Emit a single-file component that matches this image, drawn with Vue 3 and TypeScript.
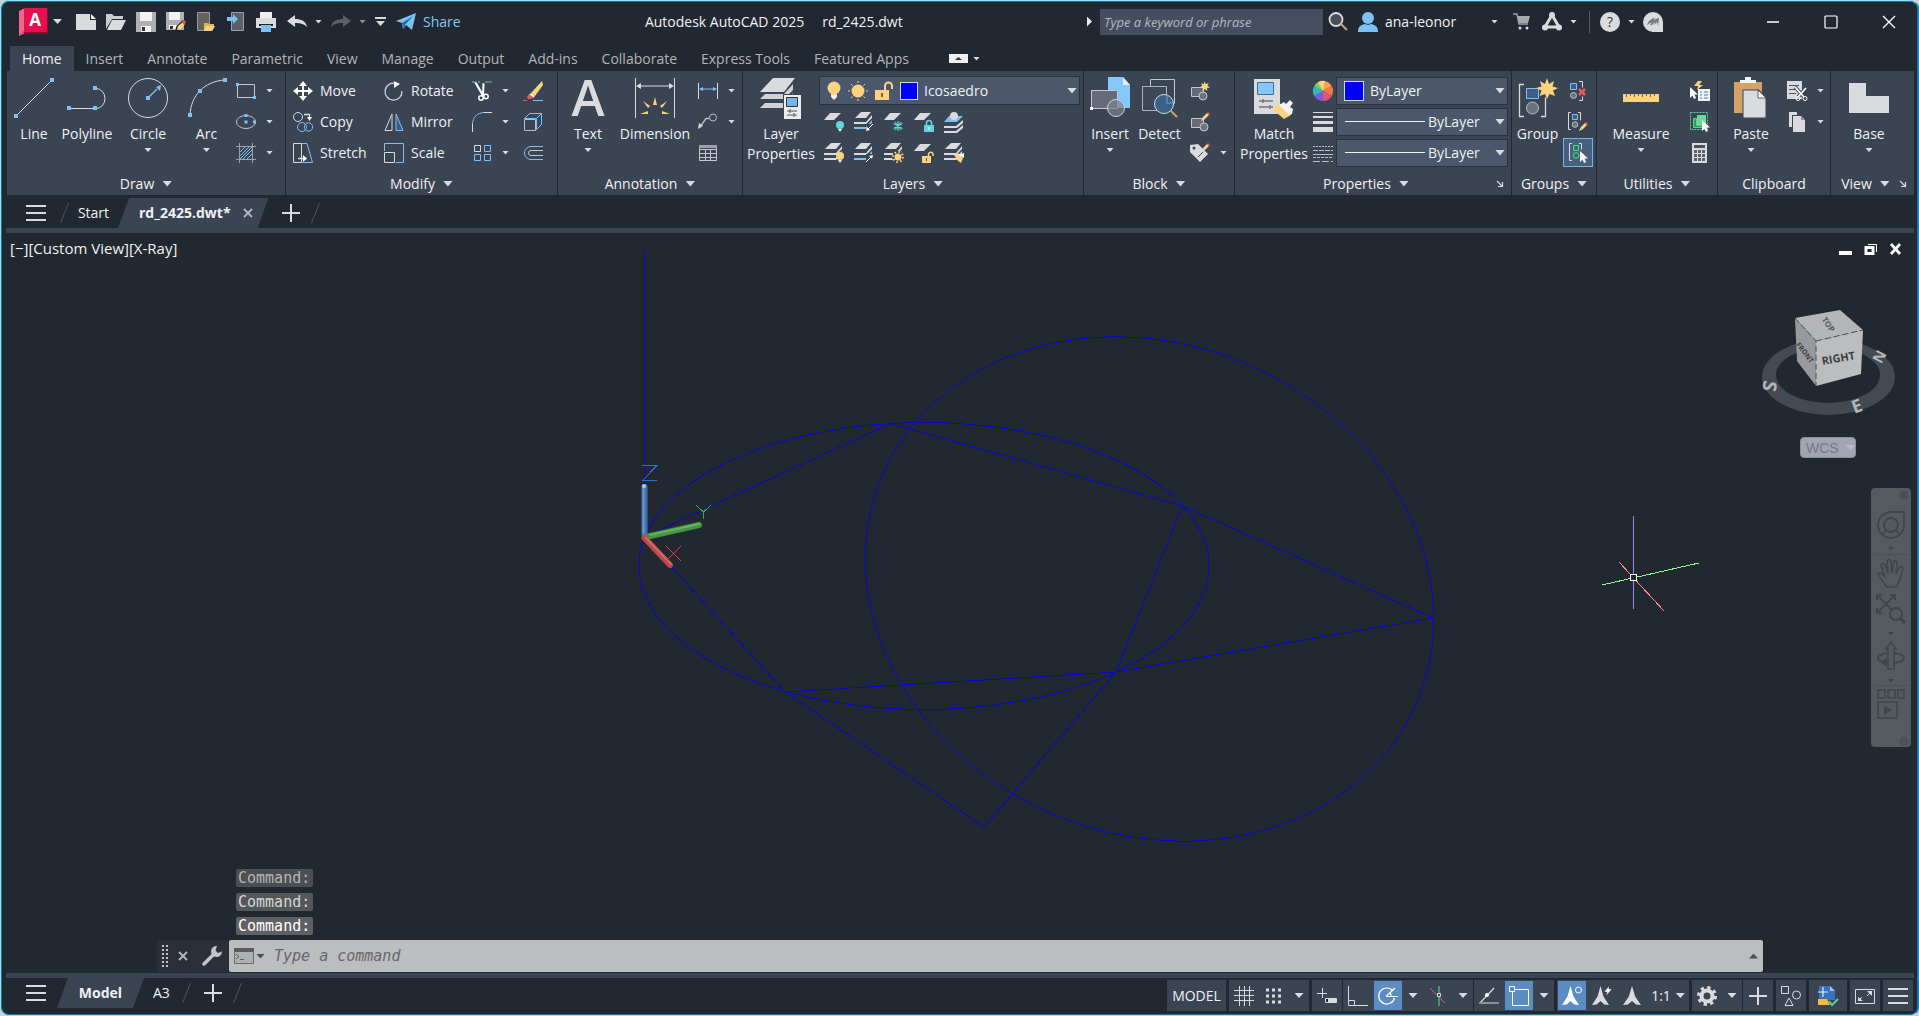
<script setup lang="ts">
import { h, ref, type FunctionalComponent } from 'vue'

const L = '#d9dbde'
const B = '#7cc0f5'
const Y = '#fbd27d'
const T = '#62d5d9'
const R = '#e8595c'

type Art = [number, number, string]

const sheet = (y: number, c = L) => `<path d="M6 ${y}h11l-7 7H0z" fill="${c}"/>`
const stack = (mid = L, last = L) =>
  `<path d="M7 0h10l-5 6H1z" fill="${L}"/><path d="M0 10h12l6-7v3l-6 6H0z" fill="${mid}"/><path d="M0 15h12l6-7v3l-6 6H0z" fill="${last}"/>`
const pencil = (x: number, y: number) =>
  `<g transform="translate(${x} ${y})"><path d="M0 9l1.500-3.500 2 2z" fill="${L}"/><path d="M1.500 5.500L6 1l2 2-4.500 4.500z" fill="${Y}"/><path d="M6 1l1-1 2 2-1 1z" fill="${R}"/></g>`
const cursor = (x: number, y: number) =>
  `<path transform="translate(${x} ${y})" d="M0 0v11l2.500-2.500L4 12l2-1-1.500-3.500H8z" fill="#fff"/>`
const node = (x: number, y: number) => `<path d="M${x - 2} ${y - 2}h4v4h-4z" fill="${B}"/>`
const compass =
  '<path d="M10 0l3.500 10.500L20 19l-5.500-.5L10 15l-4.500 3.500L0 19l6.500-8.500z"'

const art: Record<string, Art> = {
  logo: [30, 28, `<path d="M0 3L6 0v25l-6 3z" fill="#f0678c"/><path d="M5 0h24v24l1 2H5z" fill="#8e0c32"/><path d="M5 0h23v24H5L0 27l5-4z" fill="#e51050"/><text x="16" y="18" text-anchor="middle" font-family="Open Sans, sans-serif" font-weight="700" font-size="17" fill="#fff">A</text>`],
  file: [20, 16, `<path d="M0 0h14v6h6v10H0z" fill="${L}"/><path d="M15 0l5 5h-5z" fill="#f2f2f2"/>`],
  open: [20, 17, `<path d="M0 16V1h6l2 2h9v3H6z" fill="#c9cbcd"/><path d="M6 7h14l-5 10H1z" fill="${L}"/>`],
  save: [20, 20, `<path d="M0 0h20v20H0z" fill="#aeb0b3"/><path d="M4 0h12v9H4zM5 14h10v6H5z" fill="#f3f3f3"/><path d="M6 15h3v4H6z" fill="#333"/>`],
  saveas: [20, 20, `<path d="M0 0h18v18H0z" fill="#aeb0b3"/><path d="M3 0h11v8H3zM3 13h8v4H3z" fill="#f3f3f3"/><path d="M4 14h3v3H4z" fill="#333"/><path d="M9 19l1.500-5L17 8l3 3-6.500 6z" fill="#222931"/><path d="M11 18l1-4 5-4 2 2-4 5z" fill="${Y}"/><path d="M16 10l2-2 2 2-2 3z" fill="${R}"/>`],
  mobopen: [20, 20, `<path d="M1.500.5h12v18h-12z" fill="#65625f" stroke="#9a9894"/><path d="M8 19v-8h4l1 1h5v2h1l-3 5z" fill="#e0b357"/><path d="M10 14h9l-3 5H8z" fill="${Y}"/>`],
  mobsave: [18, 20, `<path d="M4.500.5h12v18h-12z" fill="#596068" stroke="#9aa0a6"/><path d="M0 5h6V2l5 5-5 5V9H0z" fill="${B}"/>`],
  print: [20, 20, `<path d="M4 0h12v6H4z" fill="#eee"/><path d="M0 6h20v10H0z" fill="${L}"/><path d="M3 12h14v2H3z" fill="#222"/><path d="M5 13h10v7H5z" fill="${B}"/>`],
  undo: [20, 13, `<path d="M8 0v4c6 0 11 2 12 8-3-3-6-4-12-4v4L0 6z" fill="${L}"/>`],
  redo: [20, 13, `<path d="M12 0v4C6 4 1 6 0 12c3-3 6-4 12-4v4l8-6z" fill="#59606a"/>`],
  custom: [12, 9, `<path d="M0 0h11v2H0zM1 4h9L5.500 9z" fill="${L}"/>`],
  plane: [20, 17, `<path d="M0 8L20 0l-4 17-6-5-3 4-1-6z" fill="${B}"/><path d="M6 10L17 3l-8 9-1 4z" fill="#2b6ea6"/>`],
  lens: [20, 19, `<circle cx="8" cy="7.500" r="6.500" fill="#4a4f57" stroke="${L}" stroke-width="1.800"/><path d="M13 12l6 6" stroke="#caa375" stroke-width="2"/>`],
  user: [20, 20, `<circle cx="10" cy="6" r="6" fill="${B}"/><path d="M0 20c0-5 2-7 7-8 2 1 4 1 6 0 5 1 7 3 7 8z" fill="${B}"/>`],
  cart: [18, 17, `<path d="M0 1h4l2 10h9" fill="none" stroke="#9a9ea4" stroke-width="1.500"/><path d="M4 3h13l-2 7H6z" fill="#a5a8ad"/><circle cx="7" cy="15" r="1.500" fill="${L}"/><circle cx="14" cy="15" r="1.500" fill="${L}"/>`],
  appdesk: [20, 19, `<path d="M10 3L3 15h14z" fill="none" stroke="${L}" stroke-width="3"/><circle cx="10" cy="3" r="3" fill="${L}"/><circle cx="3" cy="15.500" r="3" fill="${L}"/><circle cx="17" cy="15.500" r="3" fill="${L}"/>`],
  help: [20, 20, `<circle cx="10" cy="10" r="10" fill="${L}"/><text x="10" y="15" text-anchor="middle" font-family="Open Sans, sans-serif" font-size="14" fill="#333">?</text>`],
  assist: [20, 20, `<path d="M10 0a10 10 0 0110 10v10H10A10 10 0 0110 0z" fill="${L}"/><path d="M4 13c2-5 5-7 8-7l-2 4c2-3 4-4 6-4l-1 8-1-4-3 3 1-3-3 3H7l2-3z" fill="#77797d"/>`],
  min: [14, 14, '<path d="M1 7h12" stroke="#fff" stroke-width="1.500"/>'],
  max: [14, 14, '<rect x="1" y="1" width="12" height="12" rx="1" fill="none" stroke="#fff" stroke-width="1.200"/>'],
  close: [14, 14, '<path d="M1 1l12 12M13 1L1 13" stroke="#fff" stroke-width="1.300"/>'],
  mini: [19, 9, '<path d="M0 0h19v9H0z" fill="#f0f0f0"/><path d="M6 6l3.500-3L13 6z" fill="#333"/>'],
  burger: [20, 16, `<path d="M0 1h20M0 8h20M0 15h20" stroke="${L}" stroke-width="2"/>`],
  plus: [18, 18, `<path d="M9 0v18M0 9h18" stroke="${L}" stroke-width="2"/>`],
  slash: [9, 20, '<path d="M8.500 0L.5 20" stroke="#4c5461"/>'],
  x: [10, 10, '<path d="M1 1l8 8M9 1L1 9" stroke="#b3b7bd" stroke-width="1.800"/>'],

  line: [40, 40, `<path d="M2 38L38 2" stroke="${L}"/>${node(2, 38)}${node(38, 2)}`],
  polyline: [42, 40, `<path d="M3 30.500h27a9 10 0 000-20" fill="none" stroke="${L}"/>${node(3, 30)}${node(29, 30)}${node(29, 10)}`],
  circle: [40, 40, `<circle cx="20" cy="20" r="19.500" fill="none" stroke="${L}"/><path d="M20 20l9-9" stroke="${B}" stroke-width="1.500"/><path d="M33 7l-1 6-4-4z" fill="${B}"/>${node(20, 20)}`],
  arc: [40, 40, `<path d="M3 37C4 17 17 4 37 2" fill="none" stroke="${L}"/>${node(3, 37)}${node(13, 13)}${node(38, 2)}`],
  rect: [20, 20, `<path d="M1.500 3.500h17v13h-17z" fill="none" stroke="#c4c7cb"/><path d="M0 2h3v3H0zM17 15h3v3h-3z" fill="${B}"/>`],
  ellipse: [20, 20, `<ellipse cx="10" cy="10" rx="9.500" ry="6.500" fill="none" stroke="#c4c7cb"/><path d="M8.500 2h3v3h-3zM8.500 8.500h3v3h-3zM17 8.500h3v3h-3z" fill="${B}"/>`],
  hatch: [20, 20, `<path d="M3.500 0v20M16.500 0v20M0 3.500h20M0 16.500h20" stroke="#9da2aa"/><path d="M4 9l5-5M4 13l9-9M4 16L16 4M7 16l9-9M11 16l5-5" stroke="${B}"/>`],

  move: [20, 20, '<path d="M10 0l4 5h-3v4h4V6l5 4-5 4v-3h-4v4h3l-4 5-4-5h3v-4H5v3l-5-4 5-4v3h4V5H6z" fill="#fff"/>'],
  copy: [20, 20, `<circle cx="5" cy="5" r="4.500" fill="none" stroke="${L}"/><circle cx="9" cy="15" r="4.500" fill="none" stroke="${B}"/><circle cx="15.500" cy="15" r="4.200" fill="none" stroke="${B}"/><path d="M11 2.500h5.500V6" fill="none" stroke="${L}" stroke-width="1.400"/><path d="M14 5h5l-2.500 4z" fill="#fff"/>`],
  stretch: [20, 20, `<path d="M.5.500h8v19h-8z" fill="none" stroke="${L}"/><path d="M9 .5h5l5.500 19H9" fill="none" stroke="${B}"/><path d="M5 15.500h6" stroke="${L}" stroke-width="1.500"/><path d="M10 12l4 3.500-4 3.500z" fill="#fff"/>`],
  rotate: [20, 20, `<path d="M12 2.500A8.500 8.500 0 1018 10" fill="none" stroke="${L}" stroke-width="1.200"/><path d="M10 0l6 3-6 4z" fill="#fff"/>`],
  mirror: [20, 20, `<path d="M8 2v16.500H1z" fill="none" stroke="${L}"/><path d="M12 2v16.500h7z" fill="#3c5c7d" stroke="${B}"/>`],
  scale: [20, 20, `<path d="M.5 8V.500h19v19H12" fill="none" stroke="${B}"/><path d="M.5 9.500h10v10H.5z" fill="none" stroke="${L}"/>`],
  trim: [20, 20, `<path d="M0 1h8" stroke="${B}" stroke-dasharray="2 1"/><path d="M13 1h7" stroke="#9da2aa"/><path d="M2 1l3 1 7 12-2 1z" fill="#fff"/><path d="M10.500 2l2 .5-.5 12h-2z" fill="#fff"/><circle cx="9" cy="17" r="2.200" fill="none" stroke="#fff" stroke-width="1.500"/><circle cx="14" cy="15.500" r="2.200" fill="none" stroke="#fff" stroke-width="1.500"/>`],
  fillet: [20, 20, `<path d="M.500 20V12" stroke="${L}"/><path d="M.5 12C1 5 5 1 12 .5" fill="none" stroke="${B}"/><path d="M12 .5h8" stroke="${L}"/>`],
  array: [20, 20, `<path d="M2.500 2.500h6v6h-6z" fill="none" stroke="${L}"/><path d="M12.500 2.500h6v6h-6zM2.500 11.500h6v6h-6zM12.500 11.500h6v6h-6z" fill="none" stroke="${B}"/>`],
  erase: [20, 20, `<path d="M19 0L8 12l4 3 8-11z" fill="${Y}"/><path d="M8 12l4 3-2 2-4-3z" fill="#f4f4f4"/><path d="M6 13l4 3-2 2H5l-1-2z" fill="${R}"/><path d="M0 19.500h4" stroke="${R}"/><path d="M10 19.500h10" stroke="${B}"/>`],
  solid: [20, 20, `<path d="M1.500 7.500h11v11h-11z" fill="none" stroke="#b9bec5"/><path d="M1.500 6.500l5-5h12v11l-5 5v-11h-12M13.500 6.500l5-5" fill="none" stroke="${B}"/>`],
  offset: [20, 20, `<path d="M20 3.500H8a6.500 6.500 0 000 13h12" fill="none" stroke="${B}"/><path d="M20 7.500H8a2.500 2.500 0 000 5h12" fill="none" stroke="#c4c7cb"/>`],

  text: [40, 40, `<text x="20" y="38" text-anchor="middle" font-family="Open Sans, sans-serif" font-weight="600" font-size="50" fill="${L}">A</text>`],
  dimension: [40, 40, `<path d="M.5 0v40M39.500 0v40M3 8h34" stroke="${L}"/><path d="M1 8l5-3v6zM39 8l-5-3v6z" fill="${L}"/><path d="M18 27l2-8 2 8zM13 30l-5-7 7 5zM27 30l5-7-7 5zM5 36l8-3v3zM35 36l-8-3v3z" fill="${Y}"/>`],
  linear: [20, 20, `<path d="M.5 2v16M19.500 2v16" stroke="${L}"/><path d="M2 8h16" stroke="${B}"/><path d="M1 8l4-2v4zM19 8l-4-2v4z" fill="${B}"/>`],
  leader: [20, 20, `<circle cx="15" cy="5.500" r="3.500" fill="none" stroke="#b9bec5"/><path d="M11.500 6.500H8l-5 7" fill="none" stroke="#b9bec5" stroke-width="1.300"/><path d="M0 17l1-6 4 3z" fill="${L}"/>`],
  table: [20, 20, `<path d="M1.500 2.500h17v15h-17zM1.500 6.500h17M1.500 10.500h17M1.500 14.500h17M7.500 6.500v11M12.500 6.500v11" fill="none" stroke="#c4c7cb"/><path d="M1 2h18v3H1z" fill="#9da2aa"/>`],

  layers: [42, 42, `<path d="M13 1h22L24 15H0z" fill="${L}"/><path d="M0 22l5-5h19l9-10v6l-9 9z" fill="#d0d2d5"/><path d="M0 31l5-5h19l9-10v6l-9 9z" fill="#d0d2d5"/><path d="M23 17h19v25H23z" fill="#3b4453"/><path d="M24 18h17v24H24z" fill="#eceded"/><path d="M26.500 20.500h11v9h-11z" fill="#6db6ee" stroke="#333"/><path d="M27 34h10M27 38h10M30 32v4M34 36v4" stroke="#555"/>`],
  bulb: [14, 20, `<circle cx="7" cy="7" r="6.500" fill="${Y}"/><path d="M4 11h6v3H4z" fill="${Y}"/><path d="M4 14h6v2l-3 3-3-3z" fill="#f0f0f0"/>`],
  sun: [20, 20, `<circle cx="10" cy="10" r="6.500" fill="${Y}"/><path d="M10 0v2M10 18v2M0 10h2M18 10h2M3 3l1.500 1.500M15.500 15.500L17 17M17 3l-1.500 1.500M3 17l1.500-1.500" stroke="${Y}"/>`],
  unlock: [18, 18, `<path d="M0 8h14v10H0z" fill="${Y}"/><path d="M10 8V4a3.500 3.500 0 017 0v3" fill="none" stroke="${Y}" stroke-width="2"/><path d="M6 11h2v4H6z" fill="#79622f"/>`],
  ly1: [20, 20, `${sheet(1)}<circle cx="16" cy="13" r="4" fill="${T}"/><path d="M14 17h4l-2 3z" fill="#eee"/>`],
  ly2: [20, 20, `${stack(L, B)}<path d="M20 12h-7v8l2-2 3-3z" fill="#3b4453"/><path d="M19 12l-5 5" stroke="#fff"/><path d="M12 19l1-4 3 3z" fill="#fff"/>`],
  ly3: [20, 20, `${sheet(1)}<path d="M14 9v10M9.500 11.500l9 5M9.500 16.500l9-5M11 10l6 8M17 10l-6 8" stroke="${T}" stroke-width="1.200"/>`],
  ly4: [20, 20, `${sheet(1)}<path d="M10 13h10v7H10z" fill="${T}"/><path d="M12.500 13v-2a2.500 2.500 0 015 0v2" fill="none" stroke="${T}" stroke-width="1.500"/><path d="M14.500 15h1v3h-1z" fill="#fff"/>`],
  ly5: [20, 20, `<path d="M5 4h14l-6 6H0z" fill="${B}"/><circle cx="10" cy="4" r="4" fill="${L}"/><path d="M0 14h12l7-6v3l-6 5H0zM0 19h12l7-6v3l-6 5H0z" fill="${L}"/>`],
  ly6: [20, 20, `${stack()}<circle cx="16" cy="13" r="4" fill="${Y}"/><path d="M14 17h4l-2 3z" fill="#eee"/>`],
  ly7: [20, 20, `${stack(L, B)}<path d="M20 11h-8v8z" fill="#3b4453"/><path d="M12 19l5-5" stroke="#fff"/><path d="M19 12l-1 4-3-3z" fill="#fff"/>`],
  ly8: [20, 20, `${stack()}<circle cx="14" cy="14" r="6" fill="#3b4453"/><circle cx="14" cy="14" r="3.500" fill="${Y}"/><circle cx="14" cy="14" r="5" fill="none" stroke="${Y}" stroke-width="2" stroke-dasharray="1.500 2.400"/>`],
  ly9: [20, 20, `${sheet(1)}<path d="M8 13h9v7H8z" fill="${Y}"/><path d="M14.500 13v-2a2.300 2.300 0 014.500 0v2" fill="none" stroke="${Y}" stroke-width="1.500"/><path d="M12 15h1v3h-1z" fill="#555"/>`],
  ly10: [20, 20, `${stack()}<path d="M10 12l4-2 5 5-2 5-4-3z" fill="${Y}"/><path d="M14 12l3-1 3-1v5z" fill="#fff"/>`],

  insert: [40, 42, `<path d="M18 0h15l7 8v23H18z" fill="#84c8fb"/><path d="M33 0v8h7z" fill="#dfeefa"/><path d="M1.500 13.500h26v18h-26z" fill="#656c78" stroke="#c4c7cb"/><circle cx="26" cy="31" r="8.500" fill="#7c828c" fill-opacity=".7" stroke="#d0d2d5"/><path d="M0 30h3v3H0z" fill="#fff"/>`],
  detect: [38, 40, `<path d="M9.500 1.500h24v24h-24z" fill="none" stroke="#c4c7cb"/><path d="M1.500 8.500h24v24h-24z" fill="#3e4755" stroke="#aeb2b9"/><circle cx="23" cy="26" r="9.500" fill="#3c5f83" stroke="#c4dcee"/><path d="M26 17v8h7" fill="none" stroke="#5aa9e6"/><path d="M30 33l6 6" stroke="#caa375" stroke-width="2"/>`],
  bnew: [20, 20, `<path d="M1.500 6.500h12v9h-12z" fill="#656c78" stroke="#c4c7cb"/><circle cx="13" cy="15" r="4" fill="#6c737e" stroke="#c4c7cb"/><path d="M14.500 0l1.200 3 3-.8-1.200 2.600 2.500 1.700-3 .6.300 3-2.500-2-2.300 2 .2-3-3-.6 2.500-1.700L11 2.200l3 .8z" fill="${Y}"/>`],
  bedit: [20, 20, `<path d="M1.500 6.500h12v9h-12z" fill="#656c78" stroke="#c4c7cb"/><circle cx="14" cy="15" r="4" fill="#6c737e" stroke="#c4c7cb"/>${pencil(11, 0)}`],
  btag: [20, 20, `<path d="M0 2l8-1 10 10-8 8L0 9z" fill="${L}"/><circle cx="4" cy="5" r="1.500" fill="#3b4453"/><path d="M8 14l5-5" stroke="#3b4453"/>${pencil(11, 0)}`],

  match: [40, 42, `<path d="M0 2h26v35H0z" fill="${L}"/><path d="M3.500 5.500h16v12h-16z" fill="#84c8fb" stroke="#3c6f9e"/><path d="M5 24h14M5 30h14M9 22v4M16 28v4" stroke="#777" stroke-width="1.500"/><path d="M18 32l7-6 12 12-7 4z" fill="${Y}"/><path d="M25 28l5-3 2 2 4-4 3 3-3 4 3 2-1 5-3 1z" fill="#f3f3f3"/>`],
  wheel: [20, 20, `<path d="M10 10V0a10 10 0 018.700 5z" fill="#f9a24e"/><path d="M10 10l8.700-5a10 10 0 010 10z" fill="#ee7a4a"/><path d="M10 10l8.700 5A10 10 0 0110 20z" fill="#e0566f"/><path d="M10 10v10a10 10 0 01-8.700-5z" fill="#8457d8"/><path d="M10 10l-8.700 5a10 10 0 010-10z" fill="#39b7b4"/><path d="M10 10L1.300 5A10 10 0 0110 0z" fill="#7ccf62"/><path d="M10 10L5 1.300A10 10 0 0112 0z" fill="${Y}"/>`],
  weight: [20, 20, `<path d="M0 .5h20" stroke="${L}"/><path d="M0 5h20" stroke="${L}" stroke-width="2"/><path d="M0 10.500h20" stroke="${L}" stroke-width="3"/><path d="M0 17.500h20" stroke="${L}" stroke-width="5"/>`],
  ltype: [20, 20, `<path d="M0 3.500h20" stroke="#b9bec5" stroke-dasharray="2 1"/><path d="M0 7.500h20" stroke="#b9bec5" stroke-dasharray="5 1"/><path d="M0 11.500h20" stroke="#b9bec5"/><path d="M0 14.500h20" stroke="#b9bec5" stroke-dasharray="3 1"/><path d="M0 18.500h20" stroke="#b9bec5" stroke-dasharray="7 2"/>`],

  group: [40, 40, `<path d="M6 6.500H1.500v32H6M23 38.500h4.500v-19" fill="none" stroke="${L}" stroke-width="1.300"/><path d="M8.500 10.500h12v10h-12z" fill="#3c5f83" stroke="${B}"/><circle cx="14.500" cy="30" r="6" fill="#6c737e" stroke="#b9bec5"/><path d="M29 0l2 6 5-3-1.500 5.500L40 10l-5 2.500 2 5.500-5.500-2L29 21l-2-5-5.500 2 2-5.500L18 10l5.500-1.500L22 3l5 3z" fill="${Y}"/>`],
  gdel: [20, 20, `<path d="M2.500 2.500h6v6h-6z" fill="#3c5f83" stroke="${B}"/><circle cx="5.500" cy="14.500" r="3" fill="#6c737e" stroke="#b9bec5"/><path d="M11 .5h3.500v6M11 19.500h3.500v-4" fill="none" stroke="${L}"/><path d="M11 8l6 6M17 8l-6 6" stroke="${R}" stroke-width="2.500"/>`],
  gedit: [20, 20, `<path d="M3 .5H.5v17H3M10 .5h2.500v8" fill="none" stroke="${L}"/><path d="M4.500 2.500h5v5h-5z" fill="#3c5f83" stroke="${B}"/><circle cx="7" cy="12.500" r="2.800" fill="#6c737e" stroke="#b9bec5"/>${pencil(11, 10)}`],
  gsel: [20, 20, `<path d="M4 .5H1.500v17H4M11 .5h2.500v6" fill="none" stroke="${L}"/><path d="M5.500 2.500h5v5h-5z" fill="#2b7a55" stroke="#5bd392"/><circle cx="8" cy="12.500" r="2.800" fill="#2b7a55" stroke="#5bd392"/>${cursor(12, 8)}`],
  measure: [36, 8, `<path d="M0 0h36v8H0z" fill="${Y}"/><path d="M3.500 0v3M7.500 0v2M11.500 0v3M15.500 0v2M19.500 0v3M23.500 0v2M27.500 0v3M31.500 0v2" stroke="#7a6335"/>`],
  quick: [20, 20, `<path d="M8 0L4 5h4L7 9l6-5H9l3-4z" fill="${Y}"/><path d="M8 8h12v12H8z" fill="#f3f3f3"/><path d="M10 11h2M10 14h2M10 17h2M14 11h4M14 14h4M14 17h4" stroke="#3c82c9"/>${cursor(0, 6)}`],
  selall: [20, 20, `<path d="M.5.500h17v17H.5z" fill="none" stroke="#5bd392" stroke-dasharray="2 1"/><path d="M7 3h9v10H7z" fill="#6fd69c"/><path d="M3.500 6.500h3v7h7v2h-10z" fill="#2b9a63" stroke="#5bd392"/>${cursor(12, 8)}`],
  calc: [16, 20, `<path d="M0 0h15v20H0z" fill="${L}"/><path d="M2 2h11v3H2z" fill="#4b525c"/><path d="M2 7h11v11H2z" fill="#5b626c"/><path d="M2 10.500h11M2 14.500h11M5.500 7v11M9.500 7v11" stroke="${L}"/>`],
  paste: [34, 42, `<path d="M0 5h28v31H0z" fill="#d5a367"/><path d="M6 6V3h5V0h6v3h5v3z" fill="#f5f5f5"/><path d="M9 13h16l7 8v20H9z" fill="${L}" stroke="#3b4453" stroke-width="1"/><path d="M24 13v8h8z" fill="#f6f6f6" stroke="#3b4453" stroke-width=".8"/>`],
  cut: [20, 20, `<path d="M0 0h15v18H0z" fill="${L}"/><path d="M2 4.500h10M2 8.500h6M2 12.500h7" stroke="#555"/><path d="M8 6l9 10M19 7l-8 9" stroke="#3b4453" stroke-width="3.500"/><path d="M8 6l9 10M19 7l-8 9" stroke="#fff" stroke-width="1.800"/><circle cx="11" cy="17.500" r="2" fill="none" stroke="#fff"/><circle cx="18" cy="17.500" r="2" fill="none" stroke="#fff"/>`],
  clone: [20, 20, `<path d="M2 0h8v3H5v12H2z" fill="${L}"/><path d="M6 4h8l4 4v12H6z" fill="${L}"/><path d="M14 4v4h4z" fill="#8c9098"/>`],
  base: [40, 30, `<path d="M0 0h17v13h23v17H0z" fill="${L}"/>`],
  launch: [6, 6, `<path d="M0 0l5 5M5.500 1v4.500H1" fill="none" stroke="${L}" stroke-width="1.200"/>`],

  vmin: [14, 12, '<path d="M0 8h13v4H0z" fill="#fff"/>'],
  vrest: [14, 12, '<path d="M4 1.500h8.500V9" fill="none" stroke="#fff"/><path d="M2 4.500h7v6H2z" fill="none" stroke="#fff" stroke-width="3"/>'],
  vclose: [14, 12, '<path d="M2 1l9 10M11 1L2 11" stroke="#fff" stroke-width="2.800"/>'],
  grip: [6, 22, '<path d="M1 0v22M5 0v22" stroke="#c2c4c7" stroke-width="2" stroke-dasharray="2 2"/>'],
  wrench: [20, 20, '<path d="M2 18L12 8" stroke="#c2c4c7" stroke-width="3.500" stroke-linecap="round"/><path d="M15 0a5.500 5.500 0 105 5.500l-4 1.500-2.500-2.500z" fill="#c2c4c7"/>'],
  prompt: [20, 16, '<path d="M.5.500h19v15H.5z" fill="#aeafb1" stroke="#6a6a6c"/><path d="M0 0h20v4H0z" fill="#5c5c5e"/><path d="M2 6l3 2.500L2 11M6 11.500h4" fill="none" stroke="#5c5c5e"/>'],

  grid: [20, 20, `<path d="M5.500 0v20M10.500 0v20M15.500 0v20M0 4.500h20M0 9.500h20M0 14.500h20" stroke="${L}"/>`],
  dots: [16, 16, `<path d="M0 2h16M0 8h16M0 14h16" stroke="${L}" stroke-width="3" stroke-dasharray="3 3"/>`],
  dyn: [20, 20, `<path d="M5.500 2v10M0 7.500h10" stroke="${L}"/><path d="M8.500 12.500h11v4h-11z" fill="${L}" stroke="${L}"/><path d="M9 13h2v3H9z" fill="#222"/>`],
  ortho: [20, 20, `<path d="M.5 0v19.500H20M.5 14.500h6v5" fill="none" stroke="${L}"/>`],
  polar: [20, 20, '<path d="M15 5a8 8 0 101.500 7M8 10.500h12M8 10.500L17 2M12 7a4 4 0 011 3.500" fill="none" stroke="#fff" stroke-width="1.200"/>'],
  iso: [18, 20, `<path d="M10 0v20" stroke="#4fae72" stroke-width="1.500"/><path d="M1 2l15 15" stroke="#c26b78"/><path d="M8.500 7.500h3v3h-3z" fill="#3b4453" stroke="${L}"/>`],
  track: [20, 20, `<path d="M1 17L15 2" stroke="${L}" stroke-width="1.200"/><path d="M0 17h20" stroke="#8b9099" stroke-width="2"/><circle cx="8" cy="9" r="2" fill="#fff"/>`],
  osnap: [20, 20, '<path d="M3.500 3.500h16v16h-16z" fill="none" stroke="#fff"/><path d="M.5.500h5v5h-5z" fill="#5b8cc4" stroke="#fff"/>'],
  ann1: [20, 20, `<g transform="scale(.85 1)">${compass} fill="#fff"/></g><circle cx="16.500" cy="4" r="3" fill="none" stroke="#fff"/>`],
  ann2: [20, 20, `<g transform="scale(.85 1)">${compass} fill="${L}"/></g><path d="M17 0l-5 6h3l-1 4 6-7h-3z" fill="#fff" stroke="#3b4453" stroke-width=".5"/>`],
  ann3: [18, 20, `<g transform="scale(.9 1)">${compass} fill="${L}"/></g>`],
  gear: [20, 20, `<circle cx="10" cy="10" r="5.500" fill="none" stroke="${L}" stroke-width="4"/><circle cx="10" cy="10" r="8.500" fill="none" stroke="${L}" stroke-width="3" stroke-dasharray="3.300 3.380"/>`],
  iso2: [20, 20, `<path d="M.5.500h7v7h-7z" fill="none" stroke="${L}"/><circle cx="15.500" cy="9" r="4" fill="none" stroke="${L}"/><path d="M8 12l4 7.500H4z" fill="none" stroke="${L}"/>`],
  hw: [20, 20, `<path d="M1 0h11l5 5v9H1z" fill="#3673b8"/><path d="M12 0v5h5z" fill="#9cc6ee"/><path d="M0 13h9l3 6H0z" fill="#f6ba3c"/><path d="M5 1v10M0 6h10" stroke="#dfeefa" stroke-width="1.200"/><path d="M11 15l3 4 6-6" fill="none" stroke="#5bd392" stroke-width="2"/>`],
  full: [20, 16, `<path d="M.5 1.500h19v14H.5z" fill="none" stroke="${L}"/><path d="M17 3v5l-5-5zM3 13V9l5 4z" fill="${L}"/><path d="M16 4l-4 4M4 12l3-3" stroke="${L}"/>`],

  nwheel: [28, 28, '<path d="M14 1h13v13A13 13 0 1114 1z" fill="none" stroke="#3f454d" stroke-width="1.800"/><circle cx="14" cy="14" r="7" fill="none" stroke="#3f454d" stroke-width="1.800"/><path d="M9 19l-4 5M19 19l4 5" stroke="#3f454d" stroke-width="1.500"/>'],
  nhand: [28, 30, '<path d="M10 29C6 24 3 20 1 16c2-2 4-1 7 3L4 7c1-2 3-2 4 0l3 8-1-12c1-2 3-2 4 0l1 12 2-12c2-1 3 0 3 2l-1 11 4-7c2-1 3 0 3 2-2 8-4 14-7 18z" fill="none" stroke="#3f454d" stroke-width="1.500"/>'],
  nzoom: [30, 30, '<path d="M1 1l18 18M19 1L1 19M1 6V1h5M14 1h5v5M1 14v5h5" fill="none" stroke="#3f454d" stroke-width="1.800"/><circle cx="20" cy="20" r="6" fill="#545a60" stroke="#3f454d" stroke-width="1.800"/><path d="M24 24l5 5" stroke="#3f454d" stroke-width="3"/>'],
  norbit: [28, 30, '<ellipse cx="14" cy="17" rx="13" ry="5" fill="none" stroke="#3f454d" stroke-width="1.800"/><path d="M11 28V8H9l5-7 5 7h-2v20z" fill="#545a60" stroke="#3f454d" stroke-width="1.500"/><path d="M3 21l7-4v8z" fill="#3f454d"/>'],
  nmotion: [28, 30, '<path d="M1 1h7v8H1zM11 1h7v8h-7zM21 1h6v8h-6zM1 13h19v16H1z" fill="none" stroke="#3f454d" stroke-width="1.500"/><path d="M7 17l8 4-8 5z" fill="#3f454d"/>'],
  nclose: [8, 8, '<circle cx="4" cy="4" r="3.500" fill="none" stroke="#3f454d"/><path d="M2 2l4 4M6 2L2 6" stroke="#3f454d"/>'],
  nmore: [8, 8, '<circle cx="4" cy="4" r="3.500" fill="none" stroke="#3f454d"/><path d="M2 4h4" stroke="#3f454d"/>'],
}

const Icon: FunctionalComponent<{ n: string }> = (p) => {
  const [w, ht, body] = art[p.n]
  return h('svg', { class: 'icon', width: w, height: ht, viewBox: `0 0 ${w} ${ht}`, 'aria-hidden': 'true', innerHTML: body })
}
Icon.props = ['n']

const quickAccess = [
  ['file', 'New'], ['open', 'Open'], ['save', 'Save'], ['saveas', 'Save As'],
  ['mobopen', 'Open from Web and Mobile'], ['mobsave', 'Save to Web and Mobile'], ['print', 'Plot'],
]
const tabs = ['Home', 'Insert', 'Annotate', 'Parametric', 'View', 'Manage', 'Output', 'Add-ins', 'Collaborate', 'Express Tools', 'Featured Apps']
const activeTab = ref('Home')
const layerTools = [['ly1', 'ly2', 'ly3', 'ly4', 'ly5'], ['ly6', 'ly7', 'ly8', 'ly9', 'ly10']]
const layerNames = [['Off', 'Isolate', 'Freeze', 'Lock', 'Make Current'], ['Turn All Layers On', 'Unisolate', 'Thaw All Layers', 'Unlock', 'Match Layer']]

type Cell = { icon: string; label: string; on?: boolean; drop?: boolean }
const drafting: { join?: boolean; cells: Cell[] }[] = [
  { cells: [{ icon: 'grid', label: 'Grid' }, { icon: 'dots', label: 'Snap Mode', drop: true }] },
  { cells: [{ icon: 'dyn', label: 'Dynamic Input' }] },
  { join: true, cells: [{ icon: 'ortho', label: 'Ortho Mode' }, { icon: 'polar', label: 'Polar Tracking', on: true, drop: true }, { icon: 'iso', label: 'Isometric Drafting', drop: true }] },
  { join: true, cells: [{ icon: 'track', label: 'Object Snap Tracking' }, { icon: 'osnap', label: 'Object Snap', on: true, drop: true }] },
]
const command = ref('')
const keyword = ref('')
</script>

<template>
  <div class="window">
    <header class="titlebar">
      <div class="quick">
        <button class="logo" aria-label="Application menu"><Icon n="logo" /><i class="car" /></button>
        <div class="files">
          <button v-for="q in quickAccess" :key="q[0]" class="qa" :aria-label="q[1]"><Icon :n="q[0]" /></button>
        </div>
        <button class="history" aria-label="Undo"><Icon n="undo" /><i class="car sm" /></button>
        <button class="history dim" aria-label="Redo"><Icon n="redo" /><i class="car sm" /></button>
        <button class="more" aria-label="Customize Quick Access Toolbar"><Icon n="custom" /></button>
        <button class="share"><Icon n="plane" />Share</button>
      </div>
      <h1 class="title"><span>Autodesk AutoCAD 2025</span><span>rd_2425.dwt</span></h1>
      <div class="account">
        <i class="play" />
        <input v-model="keyword" class="keyword" type="text" placeholder="Type a keyword or phrase" aria-label="Search" />
        <button class="find" aria-label="Find"><Icon n="lens" /></button>
        <button class="signin"><Icon n="user" /><span>ana-leonor</span><i class="car sm" /></button>
        <button class="cart" aria-label="App Store"><Icon n="cart" /></button>
        <button class="apps" aria-label="Autodesk apps"><Icon n="appdesk" /><i class="car sm" /></button>
        <i class="rule" />
        <button class="apps" aria-label="Help"><Icon n="help" /><i class="car sm" /></button>
        <button class="assist" aria-label="Assistant"><Icon n="assist" /></button>
        <div class="winctl">
          <button aria-label="Minimize"><Icon n="min" /></button>
          <button aria-label="Maximize"><Icon n="max" /></button>
          <button aria-label="Close"><Icon n="close" /></button>
        </div>
      </div>
    </header>

    <nav class="tabs">
      <button v-for="t in tabs" :key="t" :class="{ active: t === activeTab }" @click="activeTab = t">{{ t }}</button>
      <button class="collapse" aria-label="Minimize ribbon"><Icon n="mini" /><i class="car sm" /></button>
    </nav>

    <section class="ribbon">
      <section class="panel p-draw">
        <div class="body">
          <button class="big w54"><Icon n="line" /><span>Line</span></button>
          <button class="big w52"><Icon n="polyline" /><span>Polyline</span></button>
          <button class="big w70"><Icon n="circle" /><span>Circle</span><i class="car sm" /></button>
          <button class="big w47"><Icon n="arc" /><span>Arc</span><i class="car sm" /></button>
          <div class="col lead6">
            <button class="small" aria-label="Rectangle"><Icon n="rect" /><i class="car sm" /></button>
            <button class="small" aria-label="Ellipse"><Icon n="ellipse" /><i class="car sm" /></button>
            <button class="small" aria-label="Hatch"><Icon n="hatch" /><i class="car sm" /></button>
          </div>
        </div>
        <footer><button class="name">Draw<i class="car lg" /></button></footer>
      </section>

      <section class="panel p-modify">
        <div class="body">
          <div class="col lead7 w98">
            <button class="small"><Icon n="move" />Move</button>
            <button class="small"><Icon n="copy" />Copy</button>
            <button class="small"><Icon n="stretch" />Stretch</button>
          </div>
          <div class="col w88">
            <button class="small"><Icon n="rotate" />Rotate</button>
            <button class="small"><Icon n="mirror" />Mirror</button>
            <button class="small"><Icon n="scale" />Scale</button>
          </div>
          <div class="col w51">
            <button class="small" aria-label="Trim"><Icon n="trim" /><i class="car sm" /></button>
            <button class="small" aria-label="Fillet"><Icon n="fillet" /><i class="car sm" /></button>
            <button class="small" aria-label="Array"><Icon n="array" /><i class="car sm" /></button>
          </div>
          <div class="col">
            <button class="small" aria-label="Erase"><Icon n="erase" /></button>
            <button class="small" aria-label="Explode"><Icon n="solid" /></button>
            <button class="small" aria-label="Offset"><Icon n="offset" /></button>
          </div>
        </div>
        <footer><button class="name">Modify<i class="car lg" /></button></footer>
      </section>

      <section class="panel p-annotation">
        <div class="body">
          <button class="big w60"><Icon n="text" /><span>Text</span><i class="car sm" /></button>
          <button class="big w74"><Icon n="dimension" /><span>Dimension</span></button>
          <div class="col lead6">
            <button class="small" aria-label="Linear"><Icon n="linear" /><i class="car sm" /></button>
            <button class="small" aria-label="Leader"><Icon n="leader" /><i class="car sm" /></button>
            <button class="small" aria-label="Table"><Icon n="table" /></button>
          </div>
        </div>
        <footer><button class="name">Annotation<i class="car lg" /></button></footer>
      </section>

      <section class="panel p-layers">
        <div class="body">
          <button class="big w76"><Icon n="layers" /><span>Layer<br />Properties</span></button>
          <div class="stackcol">
            <div class="combo">
              <span class="state"><Icon n="bulb" /><Icon n="sun" /><Icon n="unlock" /></span>
              <i class="swatch small-sw" />
              <select aria-label="Layer"><option>Icosaedro</option></select>
              <i class="car lg" />
            </div>
            <div v-for="(row, r) in layerTools" :key="r" class="iconrow">
              <button v-for="(n, i) in row" :key="n" class="plain" :aria-label="layerNames[r][i]"><Icon :n="n" /></button>
            </div>
          </div>
        </div>
        <footer><button class="name">Layers<i class="car lg" /></button></footer>
      </section>

      <section class="panel p-block">
        <div class="body">
          <button class="big w52"><Icon n="insert" /><span>Insert</span><i class="car sm" /></button>
          <button class="big w47"><Icon n="detect" /><span>Detect</span></button>
          <div class="col lead7">
            <button class="small" aria-label="Create Block"><Icon n="bnew" /></button>
            <button class="small" aria-label="Edit Block"><Icon n="bedit" /></button>
            <button class="small" aria-label="Edit Attributes"><Icon n="btag" /><i class="car sm" /></button>
          </div>
        </div>
        <footer><button class="name">Block<i class="car lg" /></button></footer>
      </section>

      <section class="panel p-properties">
        <div class="body">
          <button class="big w78"><Icon n="match" /><span>Match<br />Properties</span></button>
          <div class="stackcol">
            <div class="prop">
              <Icon n="wheel" />
              <div class="combo"><i class="swatch" /><select aria-label="Object color"><option>ByLayer</option></select><i class="car lg" /></div>
            </div>
            <div class="prop">
              <Icon n="weight" />
              <div class="combo"><i class="stroke" /><select aria-label="Lineweight"><option>ByLayer</option></select><i class="car lg" /></div>
            </div>
            <div class="prop">
              <Icon n="ltype" />
              <div class="combo"><i class="stroke" /><select aria-label="Linetype"><option>ByLayer</option></select><i class="car lg" /></div>
            </div>
          </div>
        </div>
        <footer><button class="name">Properties<i class="car lg" /></button><button class="launch" aria-label="Open Properties"><Icon n="launch" /></button></footer>
      </section>

      <section class="panel p-groups">
        <div class="body">
          <button class="big w51"><Icon n="group" /><span>Group</span></button>
          <div class="col">
            <button class="plain" aria-label="Ungroup"><Icon n="gdel" /></button>
            <button class="plain" aria-label="Group Edit"><Icon n="gedit" /></button>
            <button class="plain on" aria-label="Group Selection On/Off"><Icon n="gsel" /></button>
          </div>
        </div>
        <footer><button class="name">Groups<i class="car lg" /></button></footer>
      </section>

      <section class="panel p-utilities">
        <div class="body">
          <button class="big w88"><Icon n="measure" /><span>Measure</span><i class="car sm" /></button>
          <div class="col">
            <button class="plain" aria-label="Quick Select"><Icon n="quick" /></button>
            <button class="plain" aria-label="Select All"><Icon n="selall" /></button>
            <button class="plain" aria-label="Quick Calculator"><Icon n="calc" /></button>
          </div>
        </div>
        <footer><button class="name">Utilities<i class="car lg" /></button></footer>
      </section>

      <section class="panel p-clipboard">
        <div class="body">
          <button class="big w66"><Icon n="paste" /><span>Paste</span><i class="car sm" /></button>
          <div class="col lead3">
            <button class="small" aria-label="Cut"><Icon n="cut" /><i class="car sm" /></button>
            <button class="small" aria-label="Copy Clip"><Icon n="clone" /><i class="car sm" /></button>
          </div>
        </div>
        <footer><span class="name">Clipboard</span></footer>
      </section>

      <section class="panel p-view">
        <div class="body"><button class="big w76"><Icon n="base" /><span>Base</span><i class="car sm" /></button></div>
        <footer><button class="name">View<i class="car lg" /></button><button class="launch" aria-label="View options"><Icon n="launch" /></button></footer>
      </section>
    </section>

    <nav class="filetabs">
      <button class="menu" aria-label="Drawing list"><Icon n="burger" /></button>
      <Icon n="slash" />
      <button class="start">Start</button>
      <div class="current"><button class="label">rd_2425.dwt*</button><button aria-label="Close drawing"><Icon n="x" /></button></div>
      <button class="add" aria-label="New drawing"><Icon n="plus" /></button>
      <Icon n="slash" />
    </nav>

    <main class="viewport">
      <svg class="drawing" viewBox="6 233 1908 740" preserveAspectRatio="xMidYMid meet" aria-hidden="true">
        <g fill="none" stroke="#0a0ac4" shape-rendering="crispEdges">
          <path d="M644.500 249V537" />
          <ellipse cx="924" cy="566" rx="285" ry="143.500" />
          <ellipse cx="1149.500" cy="589" rx="290.400" ry="245" transform="rotate(22.5 1149.500 589)" />
          <path d="M644.500 537L890.500 423.500 1182.500 506 1433 618 1116 672 785 692z" />
          <path d="M785 692L984 827 1116 672 1182.500 506" />
        </g>
        <g stroke-linecap="round" stroke-width="6">
          <path d="M644.500 535V487" stroke="#456fae" />
          <path d="M648 536.500L699 525" stroke="#459541" />
          <path d="M644.500 538L670 565" stroke="#b84a4a" />
        </g>
        <g stroke-linecap="round" stroke-width="2">
          <path d="M643.500 533V488" stroke="#6f95cc" />
          <path d="M650 535L699 524" stroke="#63b45c" />
          <path d="M646 538L671 564" stroke="#d06a68" />
        </g>
        <circle cx="644" cy="486" r="2" fill="#a9cdf5" />
        <g fill="none" shape-rendering="crispEdges">
          <path d="M642 465.500h15L642.500 480.500H657" stroke="#2a6ed6" />
          <path d="M696 505l7.500 7 7.500-7M703.500 512v7" stroke="#33b045" />
          <path d="M666 546l15 15M681 546l-15 15" stroke="#e03c3c" />
        </g>
        <g shape-rendering="crispEdges">
          <path d="M1633.500 516v93" stroke="#8a8bff" />
          <path d="M1602 585l97-22" stroke="#86ff86" />
          <path d="M1619 562l45 49" stroke="#ff8a8a" />
          <path d="M1630.500 574.500h6v6h-6z" fill="#21282f" stroke="#fff" />
        </g>
      </svg>

      <div class="vphead">
        <span>[−][Custom View][X-Ray]</span>
        <span class="vpctl">
          <button aria-label="Minimize viewport"><Icon n="vmin" /></button>
          <button aria-label="Restore viewport"><Icon n="vrest" /></button>
          <button aria-label="Close viewport"><Icon n="vclose" /></button>
        </span>
      </div>

      <svg class="cube" width="150" height="120" viewBox="1757 304 150 120" role="img" aria-label="ViewCube">
        <path fill-rule="evenodd" fill="#444a54" d="M1763 377a66.500 38 0 10133 0a66.500 38 0 10-133 0zM1777 375a52 28 0 10104 0a52 28 0 10-104 0z" />
        <path d="M1796 318l45-8 23 20-47 11z" fill="#b3b5b8" />
        <path d="M1796 318l21 23v45l-19-25z" fill="#97999d" />
        <path d="M1817 341l47-11-2 44-45 12z" fill="#bcbdbf" />
        <path d="M1796 318l21 23v45M1817 341l47-11" fill="none" stroke="#4c4f55" stroke-dasharray="6 3" />
        <g font-family="Open Sans, sans-serif" font-weight="700" text-anchor="middle">
          <text transform="translate(1840 362) rotate(-10)" font-size="11" fill="#3c3f45">RIGHT</text>
          <text transform="translate(1804 354) rotate(52)" font-size="7" fill="#3c3f45">FRONT</text>
          <text transform="translate(1827 326) rotate(55)" font-size="8" fill="#55585d">TOP</text>
          <text transform="translate(1764 385) rotate(100)" font-size="19" fill="#b4b6ba">S</text>
          <text transform="translate(1885 359) rotate(-62)" font-size="15" fill="#b4b6ba">N</text>
          <text transform="translate(1860 412) rotate(-20)" font-size="18" fill="#b4b6ba">E</text>
        </g>
      </svg>
      <button class="wcs">WCS<i class="car lg" /></button>

      <div class="navbar">
        <button class="corner" aria-label="Close navigation bar"><Icon n="nclose" /></button>
        <button aria-label="Steering wheel"><Icon n="nwheel" /><i class="car sm" /></button>
        <button class="tight ruled" aria-label="Pan"><Icon n="nhand" /></button>
        <button aria-label="Zoom"><Icon n="nzoom" /><i class="car sm" /></button>
        <button aria-label="Orbit"><Icon n="norbit" /><i class="car sm" /></button>
        <button class="tight ruled" aria-label="ShowMotion"><Icon n="nmotion" /></button>
        <button class="corner" aria-label="Customize navigation bar"><Icon n="nmore" /></button>
      </div>

      <div class="console">
        <p>Command:</p>
        <p>Command:</p>
        <p class="last">Command:</p>
        <div class="cmdbar">
          <div class="cmdtools">
            <Icon n="grip" />
            <button aria-label="Close command line"><Icon n="x" /></button>
            <button aria-label="Customize command line"><Icon n="wrench" /></button>
          </div>
          <label class="cmdline">
            <Icon n="prompt" /><i class="car" />
            <input v-model="command" type="text" placeholder="Type a command" aria-label="Command" />
            <i class="car up" />
          </label>
        </div>
      </div>
    </main>

    <footer class="status">
      <nav class="layouts">
        <button class="menu" aria-label="Layout list"><Icon n="burger" /></button>
        <button class="model">Model</button>
        <button class="sheet">A3</button>
        <Icon n="slash" />
        <button class="add" aria-label="New layout"><Icon n="plus" /></button>
        <Icon n="slash" />
      </nav>
      <div class="toggles">
        <div class="grp"><button class="space">MODEL</button></div>
        <div v-for="(g, i) in drafting" :key="i" class="grp" :class="{ join: g.join }">
          <template v-for="c in g.cells" :key="c.icon">
            <button class="cell" :class="{ on: c.on }" :aria-label="c.label"><Icon :n="c.icon" /></button>
            <button v-if="c.drop" class="drop" :aria-label="c.label + ' options'"><i class="car" /></button>
          </template>
        </div>
        <div class="grp">
          <button class="cell on" aria-label="Show annotation objects"><Icon n="ann1" /></button>
          <button class="cell" aria-label="Add scales"><Icon n="ann2" /></button>
          <button class="cell" aria-label="Annotation scale"><Icon n="ann3" /></button>
          <button class="ratio">1:1<i class="car" /></button>
        </div>
        <div class="grp">
          <button class="cell" aria-label="Workspace switching"><Icon n="gear" /></button>
          <button class="drop" aria-label="Workspace options"><i class="car" /></button>
        </div>
        <div class="grp join"><button class="cell" aria-label="Annotation monitor"><Icon n="plus" /></button></div>
        <div class="grp"><button class="cell" aria-label="Isolate objects"><Icon n="iso2" /></button></div>
        <div class="grp"><button class="cell wide" aria-label="Graphics performance"><Icon n="hw" /></button></div>
        <div class="grp"><button class="cell" aria-label="Clean screen"><Icon n="full" /></button></div>
        <div class="grp"><button class="cell" aria-label="Customization"><Icon n="burger" /></button></div>
      </div>
    </footer>
  </div>
</template>

<style>
body {
  background: #c9d2d8;
}
</style>

<style scoped>
* {
  box-sizing: border-box;
}
.window {
  display: flex;
  flex-direction: column;
  min-height: 100vh;
  padding: 0 4px 0 5px;
  border: 1px solid #8fe6fb;
  border-right-color: #0f86c6;
  border-radius: 9px;
  box-shadow: inset 0 0 0 1px #26718a;
  background: #222831;
  color: #f0f1f3;
  font: 14px/20px 'Open Sans', 'Noto Sans', sans-serif;
}
button {
  display: flex;
  align-items: center;
  padding: 0;
  border: 0;
  background: none;
  color: inherit;
  font: inherit;
  white-space: nowrap;
}
.icon {
  display: block;
  flex: none;
  overflow: visible;
}
.car {
  flex: none;
  width: 9px;
  height: 5px;
  background: #d9dbde;
  clip-path: polygon(0 0, 100% 0, 50% 100%);
}
.car.sm {
  width: 7px;
  height: 4px;
}
.car.lg {
  width: 10px;
  height: 6px;
}
.car.up {
  clip-path: polygon(0 100%, 100% 100%, 50% 0);
}

.titlebar {
  display: flex;
  align-items: center;
  height: 45px;
  padding: 0 18px 4px 13px;
}
.quick,
.account,
.files,
.winctl {
  display: flex;
  align-items: center;
}
.logo {
  gap: 4px;
  margin-right: 14px;
}
.files {
  gap: 10px;
}
.qa {
  justify-content: center;
  width: 20px;
  height: 24px;
}
.history {
  gap: 8px;
  margin-left: 11px;
}
.history + .history {
  margin-left: 9px;
}
.dim .car {
  background: #8b9099;
}
.more {
  margin: 0 9px;
}
.share {
  gap: 7px;
  color: #84c6f2;
}
.title {
  display: flex;
  flex: 1;
  justify-content: center;
  gap: 18px;
  margin: 0;
  font-size: 14px;
  font-weight: 400;
}
.play {
  width: 5px;
  height: 10px;
  margin-right: 8px;
  background: #e8eaec;
  clip-path: polygon(0 0, 100% 50%, 0 100%);
}
.keyword {
  width: 223px;
  height: 26px;
  padding: 0 4px;
  border: 0;
  background: #454e60;
  color: #f0f1f3;
  font: italic 13px 'Open Sans', 'Noto Sans', sans-serif;
}
.keyword::placeholder {
  color: #b4b9c2;
  opacity: 1;
}
.find {
  margin: 0 10px 0 5px;
}
.signin {
  gap: 7px;
}
.signin span {
  width: 99px;
  text-align: left;
}
.cart {
  margin: 0 11px 0 15px;
}
.apps {
  gap: 8px;
}
.rule {
  width: 1px;
  height: 22px;
  margin: 0 10px 0 12px;
  background: #565d68;
}
.assist {
  margin-left: 8px;
}
.winctl {
  gap: 44px;
  margin-left: 103px;
}

.tabs {
  display: flex;
  height: 25px;
  padding-left: 4px;
  color: #b1b5bb;
}
.tabs button {
  padding: 0 12px;
}
.tabs .active {
  background: #3b4453;
  color: #f0f1f3;
}
.tabs .collapse {
  gap: 5px;
  padding-left: 28px;
}

.ribbon {
  display: flex;
  height: 124px;
  margin-left: 1px;
  background: #3b4453;
}
.panel {
  display: flex;
  flex: none;
  flex-direction: column;
  padding-top: 5px;
  border-right: 1px solid #222831;
}
.p-draw {
  width: 279px;
}
.p-modify {
  width: 272px;
}
.p-annotation {
  width: 185px;
}
.p-layers {
  width: 341px;
}
.p-block {
  width: 151px;
}
.p-properties {
  width: 277px;
}
.p-groups {
  width: 85px;
}
.p-utilities {
  width: 121px;
}
.p-clipboard {
  width: 113px;
}
.p-view {
  flex: 1;
  border: 0;
}
.body {
  display: flex;
  flex: 1;
}
.panel footer {
  display: flex;
  height: 23px;
  align-items: center;
}
.name {
  display: flex;
  flex: 1;
  align-items: center;
  justify-content: center;
  gap: 8px;
}
.launch {
  width: 14px;
}
.big {
  display: grid;
  grid-template-rows: 44px;
  row-gap: 4px;
  align-content: start;
  justify-items: center;
  align-items: center;
  text-align: center;
}
.big .car {
  align-self: start;
}
.w47 {
  width: 47px;
}
.w51 {
  width: 51px;
}
.w52 {
  width: 52px;
}
.w54 {
  width: 54px;
}
.w60 {
  width: 60px;
}
.w66 {
  width: 66px;
}
.w70 {
  width: 70px;
}
.w74 {
  width: 74px;
}
.w76 {
  width: 76px;
}
.w78 {
  width: 78px;
}
.w88 {
  width: 88px;
}
.w98 {
  width: 98px;
}
.lead3 {
  padding-left: 3px;
}
.lead6 {
  padding-left: 6px;
}
.lead7 {
  padding-left: 7px;
}
.col,
.stackcol {
  display: flex;
  flex-direction: column;
  gap: 2px;
}
.small {
  gap: 7px;
  height: 29px;
}
.small .car {
  margin-left: 3px;
}
.plain {
  justify-content: center;
  width: 30px;
  height: 29px;
}
.plain.on {
  border: 1px solid #6cb8ee;
  background: #47607e;
}
.stackcol {
  flex: 1;
  padding-right: 3px;
}
.iconrow {
  display: flex;
}
.combo {
  display: flex;
  flex: 1;
  align-items: center;
  height: 28px;
  padding: 0 2px 0 7px;
  border: 1px solid #2a323f;
  background: #4b586b;
}
.stackcol > .combo {
  flex: none;
  height: 29px;
}
.combo select {
  flex: 1;
  min-width: 0;
  padding: 0;
  border: 0;
  appearance: none;
  background: none;
  color: #f0f1f3;
  font: inherit;
}
.state {
  display: flex;
  align-items: center;
  gap: 7px;
}
.swatch {
  width: 20px;
  height: 20px;
  margin-right: 6px;
  border: 1px solid #d4d7db;
  background: #0000fe;
}
.small-sw {
  width: 18px;
  height: 18px;
  margin: 0 6px 0 7px;
}
.stroke {
  width: 80px;
  height: 1px;
  margin: 0 3px 0 1px;
  background: #f0f1f3;
}
.prop {
  display: flex;
  align-items: center;
  gap: 3px;
  height: 29px;
}

.filetabs {
  display: flex;
  align-items: center;
  height: 38px;
  padding: 2px 0 5px 20px;
  background: linear-gradient(#3b4453, #3b4453) bottom / 100% 5px no-repeat;
}
.menu {
  margin-right: 14px;
}
.start {
  width: 49px;
  justify-content: center;
}
.current {
  display: flex;
  align-items: center;
  align-self: flex-end;
  gap: 12px;
  height: 30px;
  padding: 0 16px 0 21px;
  clip-path: polygon(11px 0, 100% 0, calc(100% - 11px) 100%, 0 100%);
  background: #3b4453;
}
.label {
  font-weight: 700;
}
.add {
  margin: 0 11px 0 13px;
}

.viewport {
  position: relative;
  display: flex;
  flex: 1;
  flex-direction: column;
  justify-content: space-between;
  min-height: 600px;
  background: #21282f;
}
.drawing {
  position: absolute;
  inset: 0;
  width: 100%;
  height: 100%;
}
.vphead {
  display: flex;
  justify-content: space-between;
  padding: 5px 11px 0 4px;
  font-size: 15px;
}
.vpctl {
  display: flex;
  gap: 11px;
  padding-top: 2px;
}
.cube {
  position: absolute;
  top: 71px;
  right: 8px;
}
.wcs {
  position: absolute;
  top: 204px;
  right: 58px;
  gap: 7px;
  width: 56px;
  height: 21px;
  padding-left: 5px;
  border: 1px solid #8a8d99;
  border-radius: 4px;
  background: #a2a5b2;
  color: #777a86;
  font: 14px 'Liberation Sans', sans-serif;
}
.wcs .car {
  background: #b9bbc6;
}
.navbar {
  position: absolute;
  top: 255px;
  right: 3px;
  display: flex;
  flex-direction: column;
  width: 40px;
  height: 259px;
  padding: 2px 3px;
  border-radius: 4px;
  background: #545a60;
}
.navbar button {
  flex-direction: column;
  justify-content: center;
  gap: 8px;
  height: 47px;
}
.navbar .car {
  background: #3f454d;
}
.navbar .tight {
  height: 37px;
}
.navbar .ruled {
  border-top: 1px solid #4b5157;
}
.navbar .corner {
  align-self: flex-end;
  height: 9px;
}
.navbar button:nth-child(2) {
  margin-top: 8px;
}
.navbar .corner:last-child {
  margin-top: auto;
}
.console {
  position: relative;
  margin: 0 151px;
  font: 15px/18px 'DejaVu Sans Mono', 'Liberation Mono', monospace;
}
.console p {
  width: 77px;
  margin: 0 0 6px 79px;
  padding-left: 2px;
  border-radius: 2px;
  background: #4c4e52;
  color: #b5b6b8;
}
.console p + p {
  background: #545659;
  color: #d5d6d7;
}
.console .last {
  margin-bottom: 5px;
  background: #5f6063;
  color: #fff;
}
.cmdbar {
  display: flex;
  height: 32px;
  margin-bottom: 1px;
}
.cmdtools {
  display: flex;
  align-items: center;
  gap: 10px;
  width: 72px;
  padding-left: 5px;
  background: #2a2f3a;
}
.cmdtools button:last-child {
  margin-left: 4px;
}
.cmdline {
  display: flex;
  flex: 1;
  align-items: center;
  padding: 0 5px;
  border-radius: 2px;
  background: #bcbdbf;
}
.cmdline .car {
  margin: 0 9px 0 2px;
  background: #4f5052;
}
.cmdline .car.up {
  margin: 0;
}
.cmdline input {
  flex: 1;
  height: 24px;
  padding: 0;
  border: 0;
  background: none;
  font: italic 15px 'DejaVu Sans Mono', 'Liberation Mono', monospace;
}
.cmdline input::placeholder {
  color: #67686a;
  opacity: 1;
}

.status {
  display: flex;
  justify-content: space-between;
  height: 42px;
  padding: 5px 1px 3px 20px;
  background: linear-gradient(#3b4453, #3b4453) top / 100% 5px no-repeat;
}
.layouts {
  display: flex;
  align-items: center;
  height: 30px;
}
.layouts .menu {
  margin-right: 11px;
}
.model {
  justify-content: center;
  width: 87px;
  height: 30px;
  clip-path: polygon(11px 0, 100% 0, calc(100% - 11px) 100%, 0 100%);
  background: #3b4453;
  font-weight: 700;
}
.sheet {
  margin: 0 12px 0 9px;
}
.toggles {
  display: flex;
  gap: 3px;
  padding: 2px 0 1px;
}
.grp {
  display: flex;
  align-items: center;
  height: 31px;
  background: #3b4453;
}
.join {
  margin-left: -2px;
}
.space {
  justify-content: center;
  width: 59px;
}
.cell {
  justify-content: center;
  width: 30px;
  height: 29px;
}
.cell.wide {
  width: 38px;
}
.cell.on {
  background: #5b8cc4;
  background-clip: content-box;
  padding: 0 1px;
}
.drop {
  justify-content: center;
  width: 20px;
  height: 29px;
}
.ratio {
  justify-content: center;
  gap: 5px;
  width: 42px;
}
</style>
